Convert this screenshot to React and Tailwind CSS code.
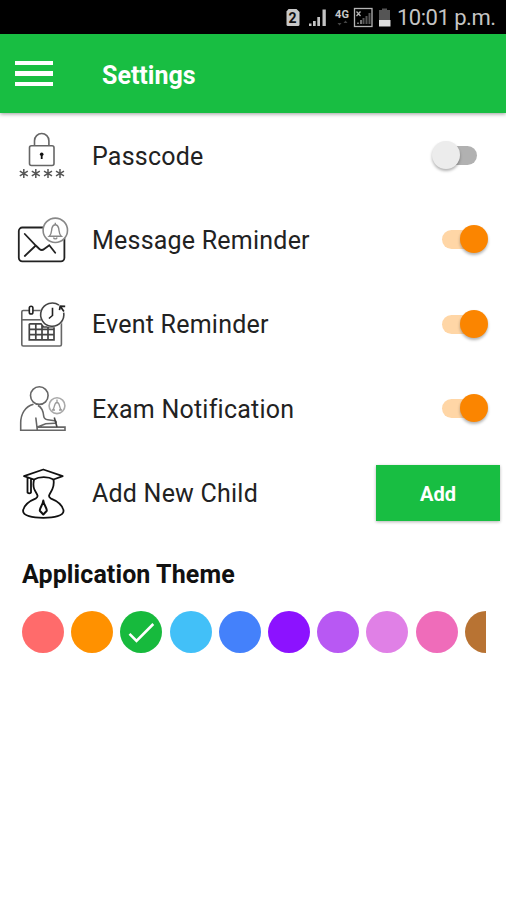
import React, { useState } from 'react'

const PasscodeIcon = () => (
  <svg className="h-14 w-14 shrink-0" viewBox="0 0 56 56" fill="none" stroke="#666" strokeWidth="1.6">
    <path d="M20.5 17.7v-5a7.2 7.2 0 0 1 14.4 0v5" />
    <rect x="15.5" y="17.7" width="24.5" height="19.8" rx="2" />
    <circle cx="27.7" cy="26.3" r="1.8" fill="#111" stroke="none" />
    <path d="M27.7 26v5" stroke="#111" strokeWidth="1.8" />
    {[9.8, 21.8, 34, 46].map((x) => (
      <path key={x} d={`M${x} 41v9M${x - 4} 43.2l8 4.6M${x - 4} 47.8l8-4.6`} stroke="#555" strokeWidth="1.5" />
    ))}
  </svg>
)

const MessageIcon = () => (
  <svg className="h-14 w-14 shrink-0" viewBox="0 0 56 56" fill="none" stroke="#222" strokeWidth="1.8">
    <rect x="4.8" y="14.5" width="45.6" height="33.8" rx="3.5" />
    <path d="M10.8 21l11 11.5 3.6 3.5q2.400 2 4.800 0l5.100-3.700M10.800 43l11-10.500M35.300 32.300l5.900 7.400" strokeLinecap="round" />
    <circle cx="41.300" cy="17.300" r="12.200" fill="#fff" stroke="#888" strokeWidth="1.600" />
    <path d="M35.300 23.300c2.600-2.200 2-5.500 2.700-8.300.5-2.100 1.700-3.300 3.300-3.300s2.800 1.200 3.300 3.300c.7 2.800.1 6.100 2.700 8.300zM39.500 24.500c.5 1.800 3.100 1.800 3.600 0M41.300 9.800v2" stroke="#888" strokeWidth="1.400" />
  </svg>
)

const EventIcon = () => (
  <svg className="h-14 w-14 shrink-0" viewBox="0 0 56 56" fill="none" stroke="#666" strokeWidth="1.600">
    <rect x="7.800" y="13.500" width="39.600" height="35.500" rx="1.500" />
    <path d="M8 22.800h22" />
    <rect x="15.300" y="9.300" width="3.600" height="7.700" rx="1.800" fill="#fff" stroke="#222" />
    <path d="M15.300 26.800v16h24.700v-13M15.300 26.800h11.700l2.500 3.200H40M15.300 32.300H40M15.300 37.600H40M21.800 27v16M28 28v15M34 30v13" stroke="#444" strokeWidth="1.700" />
    <circle cx="38.300" cy="17.800" r="12.500" fill="#fff" stroke="none" />
    <path d="M45 8.200a11.600 11.600 0 1 0 4.700 7.500" stroke="#444" />
    <path d="M45.500 13.200l.7-4 5 .2M46.300 9.300l3.600 5.200" stroke="#222" strokeWidth="1.700" />
    <path d="M38.500 10.800v7.700l-3.600 3" stroke="#222" />
  </svg>
)

const ExamIcon = () => (
  <svg className="h-14 w-14 shrink-0" viewBox="0 0 56 56" fill="none" stroke="#666" strokeWidth="1.600">
    <circle cx="25.300" cy="14.600" r="8.800" />
    <path d="M19.500 23.300C11 25.500 6.700 33 6.700 42v7.200H51v-3.100H23.500M24 24.500c4.300 2 5.300 6.500 5.700 10.500.3 3 1.800 3.500 4 3.800l7 1c2.200.4 2 2.300 0 2.400l-9 .5-8.200 3.300M21.800 36.500l1.500 12.500" />
    <path d="M40.300 36.500l2.700 9.500" stroke="#444" />
    <circle cx="43" cy="24.700" r="7.900" stroke="#aaa" />
    <path d="M38.800 29c2.200-2 1-7.500 4.200-7.500s2 5.500 4.200 7.500M43 18.500v3M38 29h3M45 29h3" stroke="#999" strokeWidth="1.300" />
  </svg>
)

const ChildIcon = () => (
  <svg className="h-14 w-14 shrink-0" viewBox="0 0 56 56" fill="none" stroke="#111" strokeWidth="1.800" strokeLinejoin="round">
    <path d="M20 13.500c5-3.200 14.500-3.200 19.500 0l9.200-3.400L29.300 3.500 10 10.100zM13.500 12v14.500q1.800 1.700 3.500 0V13" />
    <path d="M20 13.500c-.5 3-1.300 6 .2 9.500 1 2.600 2.600 4.200 3.300 6.500.3 1.200-.3 2-1.500 2.800-5.500 2.200-12 6.500-12.900 12.200-.8 5.400 9.700 7.300 20.200 7.300s21-1.900 20.200-7.300c-.9-5.700-7.400-10-12.900-12.200-1.200-.8-1.800-1.600-1.500-2.800.7-2.300 2.300-3.900 3.300-6.500 1.500-3.500 1.600-6.500 1.100-9.500" />
    <path d="M29.300 34.500c-.3 4-3.500 7-3.500 10.200l3.500 3.800 3.500-3.800c0-3.200-3.200-6.200-3.500-10.200z" strokeWidth="2" />
  </svg>
)

const StatusBar = () => (
  <div className="flex h-[34px] shrink-0 items-center bg-black pl-[285px] text-[#c4c4c4]">
    <svg className="h-[34px] w-[108px] shrink-0" viewBox="285 0 108 34" fill="none">
      <path d="M288.500 9h8l3 3v12.500q0 1.500-1.500 1.500h-10q-1.500 0-1.500-1.500V11.500z" fill="#c8c8c8" />
      <text x="292.500" y="23" fill="#111" fontFamily="Roboto, sans-serif" fontSize="14" fontWeight="700" textAnchor="middle">2</text>
      <path d="M309 26v-2.500h2.500V26zM313 26v-5h2.700v5zM317.300 26v-9h2.700v9zM322.500 26V9.500h3.300V26z" fill="#c4c4c4" />
      <text x="342" y="17.800" fill="#c8c8c8" fontFamily="Roboto, sans-serif" fontSize="11" fontWeight="700" textAnchor="middle">4G</text>
      <path d="M337.500 23l2 2.500 2-2.500zM343.500 23l2-2.500 2 2.500z" fill="#444" />
      <rect x="354.500" y="8.500" width="17.500" height="18" stroke="#b5b5b5" strokeWidth="1.300" />
      <path d="M356.500 11.500l4 4.500M360.500 11.500l-4 4.500M358 24v-1.500M361 24v-4" stroke="#b5b5b5" strokeWidth="1.300" />
      <path d="M363.500 24v-6M366.500 24v-8M369.500 24V13" stroke="#555" strokeWidth="2" />
      <path d="M379 10h3V8.500h5V10h3v10h-11z" fill="#555" />
      <path d="M379 20h11.500v6.500H379z" fill="#ddd" />
    </svg>
    <span className="ml-[4px] mt-[2px] whitespace-nowrap text-[22px] leading-none tracking-[-0.5px]">10:01 p.m.</span>
  </div>
)

const Toggle = ({ on, onChange, label }) => (
  <button
    role="switch"
    aria-checked={on}
    aria-label={label}
    onClick={onChange}
    className={`relative -top-[0.6px] mr-[29px] h-[19px] w-[35px] rounded-full ${on ? 'bg-[#ffd6a6]' : 'bg-[#b1b1b1]'}`}
  >
    <span
      className={`absolute -top-[5px] h-[28px] w-[28px] rounded-full shadow-[0_2px_3px_rgba(0,0,0,0.3)] ${
        on ? 'left-[18px] bg-[#fb8500]' : '-left-[10px] bg-[#ececec]'
      }`}
    />
  </button>
)

const themes = [
  { name: 'coral', color: 'bg-[#ff6b6b]' },
  { name: 'orange', color: 'bg-[#ff9100]' },
  { name: 'green', color: 'bg-[#17ba3d]' },
  { name: 'sky', color: 'bg-[#42c0f8]' },
  { name: 'blue', color: 'bg-[#4481fb]' },
  { name: 'violet', color: 'bg-[#8c12ff]' },
  { name: 'purple', color: 'bg-[#b858f3]' },
  { name: 'orchid', color: 'bg-[#e080e6]' },
  { name: 'pink', color: 'bg-[#ef6cba]' },
  { name: 'brown', color: 'bg-[#b87333]' },
]

const rows = [
  { key: 'passcode', name: 'Passcode', icon: PasscodeIcon },
  { key: 'message', name: 'Message Reminder', icon: MessageIcon },
  { key: 'event', name: 'Event Reminder', icon: EventIcon },
  { key: 'exam', name: 'Exam Notification', icon: ExamIcon },
]

const App = () => {
  const [settings, setSettings] = useState({ passcode: false, message: true, event: true, exam: true })
  const [theme, setTheme] = useState('green')

  const toggle = (key) => setSettings({ ...settings, [key]: !settings[key] })

  return (
    <div className="flex h-screen flex-col overflow-hidden bg-white font-['Roboto',sans-serif] text-[#222]">
      <StatusBar />

      {/* App bar */}
      <header className="flex h-[79px] shrink-0 items-center bg-[#18be42] pl-[15px] shadow-[0_1px_4px_rgba(0,0,0,0.4)]">
        <button aria-label="Menu" className="flex w-[38px] flex-col gap-[6px]">
          <span className="h-[4.5px] w-full bg-white" />
          <span className="h-[4.5px] w-full bg-white" />
          <span className="h-[4.5px] w-full bg-white" />
        </button>
        <h1 className="ml-[49px] mt-[3px] text-[25px] font-bold leading-none text-white">Settings</h1>
      </header>

      {/* Settings list */}
      <main className="flex flex-col pt-px">
        {rows.map(({ key, name, icon: Icon }) => (
          <div key={key} className="flex h-[84.4px] items-center pl-[14px]">
            <Icon />
            <span className="ml-[22px] flex-1 whitespace-nowrap text-[25px] leading-none tracking-[0.22px]">{name}</span>
            <Toggle on={settings[key]} onChange={() => toggle(key)} label={name} />
          </div>
        ))}
        <div className="flex h-[84.4px] items-center pl-[14px]">
          <ChildIcon />
          <span className="ml-[22px] flex-1 whitespace-nowrap text-[25px] leading-none tracking-[0.22px]">Add New Child</span>
          <button className="mb-[2px] mr-[6px] h-[56px] w-[124px] bg-[#18be42] pt-[3px] text-[20px] font-bold leading-none text-white shadow-[0_1px_3px_rgba(0,0,0,0.3)]">
            Add
          </button>
        </div>
      </main>

      {/* Theme picker */}
      <section className="pl-[22px] pr-5 pt-[26.5px]">
        <h2 className="whitespace-nowrap text-[25px] font-bold leading-none tracking-[0.1px] text-[#111]">Application Theme</h2>
        <div className="mt-[24px] flex gap-[7.2px] overflow-hidden">
          {themes.map((item) => (
            <button
              key={item.name}
              aria-label={item.name}
              onClick={() => setTheme(item.name)}
              className={`flex h-[42px] w-[42px] shrink-0 items-center justify-center rounded-full ${item.color}`}
            >
              {theme === item.name && (
                <svg className="h-[42px] w-[42px]" viewBox="0 0 42 42" fill="none" stroke="#fff" strokeWidth="2.6">
                  <path d="M9.5 22.8l7 7L33.3 13" />
                </svg>
              )}
            </button>
          ))}
        </div>
      </section>
    </div>
  )
}

export default App
